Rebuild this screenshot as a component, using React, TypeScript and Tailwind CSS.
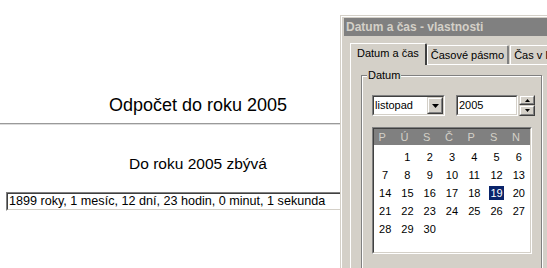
import React from 'react';

const weekDays = ['P', 'Ú', 'S', 'Č', 'P', 'S', 'N'];
const cells: (number | null)[] = [null, ...Array.from({ length: 30 }, (_, i) => i + 1)];

const sunkenOuter = 'border border-t-[#808080] border-l-[#808080] border-r-white border-b-white';
const sunkenInner = 'border border-t-[#404040] border-l-[#404040] border-r-[#d4d0c8] border-b-[#d4d0c8]';
const raisedOuter = 'border border-t-[#d4d0c8] border-l-[#d4d0c8] border-r-[#404040] border-b-[#404040]';
const raisedInner = 'border border-t-white border-l-white border-r-[#808080] border-b-[#808080] bg-[#d4d0c8]';

function CountdownPage() {
  return (
    <div className="w-[396px] pt-[95px] text-center">
      <h1 className="text-[18px] leading-[21px]">Odpočet do roku 2005</h1>
      <div className="mt-[7px] h-[2px] border-t border-b border-t-[#9a9a9a] border-b-[#dcdcdc]" />
      <p className="mt-[30px] text-[15.5px] leading-[18px]">Do roku 2005 zbývá</p>
      <div className={`ml-[6px] mt-[19px] h-[19px] w-[380px] ${sunkenOuter}`}>
        <div className={`h-full bg-white pl-[1px] text-left text-[12.6px] leading-[15px] ${sunkenInner}`}>
          1899 roky, 1 mesíc, 12 dní, 23 hodin, 0 minut, 1 sekunda
        </div>
      </div>
    </div>
  );
}

function Calendar() {
  return (
    <div className={`mt-[11px] h-[127px] w-[160px] ${sunkenOuter}`}>
      <div className={`h-full bg-white ${sunkenInner}`}>
        <div className="grid h-[16px] grid-cols-7 bg-[#808080] text-[#d4d0c8]">
          {weekDays.map((d, i) => (
            <span key={i} className="pr-[6px] text-center leading-[17px]">
              {d}
            </span>
          ))}
        </div>
        <div className="mt-[3px] grid grid-cols-7">
          {cells.map((n, i) => (
            <div key={i} className="h-[18px] text-center leading-[18px]">
              {n === 19 ? <span className="bg-[#0a246a] px-[1px] py-[1px] text-white">19</span> : n}
            </div>
          ))}
        </div>
      </div>
    </div>
  );
}

function PropertiesDialog() {
  return (
    <div className="absolute left-[340px] top-[15px] h-[260px] w-[230px] border-t border-l border-t-[#d4d0c8] border-l-[#d4d0c8] bg-[#d4d0c8] text-[11px]">
      <div className="h-full border-t border-l border-t-white border-l-white pl-[2px] pt-[1px]">
        {/* title bar */}
        <div className="h-[18px] bg-[#808080] pl-[2px] text-[12px] font-bold leading-[18px] text-[#d4d0c8]">
          Datum a čas - vlastnosti
        </div>

        {/* tabs */}
        <div className="ml-[6px] mt-[7px] flex h-[21px] items-end whitespace-nowrap">
          <div className="relative z-10 -mb-px flex h-[22px] shrink-0 items-center rounded-tr-[2px] border-t border-l border-r-2 border-t-white border-l-white border-r-[#404040] bg-[#d4d0c8] px-[6px] pb-[2px]">
            Datum a čas
          </div>
          <div className="flex h-[19px] shrink-0 items-center rounded-tr-[2px] border-t border-l border-r-2 border-t-white border-l-white border-r-[#808080] px-[3px]">
            Časové pásmo
          </div>
          <div className="ml-[1px] flex h-[19px] shrink-0 items-center border-t border-l border-t-white border-l-white px-[3px]">
            Čas v Internetu
          </div>
        </div>

        {/* tab panel */}
        <div className="ml-[6px] h-[220px] border-t border-l border-t-white border-l-white">
          <fieldset className="ml-[10px] mt-[4px] h-[200px] w-[181px] border border-[#808080] pl-[10px] shadow-[inset_1px_1px_0_#fff,1px_1px_0_#fff]">
            <legend className="-ml-[5px] bg-[#d4d0c8] px-[1px] leading-[13px]">Datum</legend>

            <div className="mt-[13px] flex items-start">
              <div className={`h-[21px] w-[73px] ${sunkenOuter}`}>
                <div className={`flex h-full items-center bg-white pl-[1px] ${sunkenInner}`}>
                  <span className="flex-1 leading-[15px]">listopad</span>
                  <div className={`h-[17px] w-[16px] ${raisedOuter}`}>
                    <div className={`flex h-full items-center justify-center ${raisedInner}`}>
                      <svg width="7" height="4" viewBox="0 0 7 4">
                        <path d="M0 0h7L3.5 4z" fill="#000" />
                      </svg>
                    </div>
                  </div>
                </div>
              </div>

              <div className={`ml-[11px] h-[21px] w-[62px] ${sunkenOuter}`}>
                <div className={`flex h-full items-center bg-white pl-[1px] ${sunkenInner}`}>
                  <span className="leading-[15px]">2005</span>
                </div>
              </div>

              <div className="ml-[1px] flex w-[16px] flex-col">
                <div className={`h-[10px] ${raisedOuter}`}>
                  <div className={`flex h-full items-center justify-center ${raisedInner}`}>
                    <svg width="5" height="3" viewBox="0 0 5 3">
                      <path d="M2.5 0L5 3H0z" fill="#000" />
                    </svg>
                  </div>
                </div>
                <div className={`h-[11px] ${raisedOuter}`}>
                  <div className={`flex h-full items-center justify-center ${raisedInner}`}>
                    <svg width="5" height="3" viewBox="0 0 5 3">
                      <path d="M0 0h5L2.5 3z" fill="#000" />
                    </svg>
                  </div>
                </div>
              </div>
            </div>

            <Calendar />
          </fieldset>
        </div>
      </div>
    </div>
  );
}

export default function App() {
  return (
    <div className="relative h-[268px] w-[547px] overflow-hidden bg-white font-['Liberation_Sans',Arial,sans-serif] text-black">
      <CountdownPage />
      <PropertiesDialog />
    </div>
  );
}
